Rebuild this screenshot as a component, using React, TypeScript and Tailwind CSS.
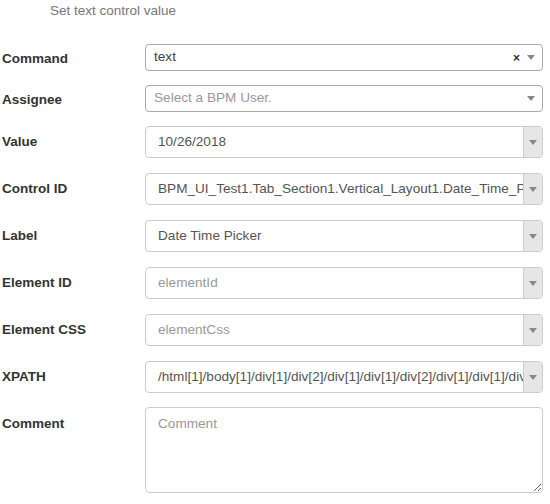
import React from "react";

const Arrow = () => (
  <span className="block w-0 h-0 border-l-[4px] border-r-[4px] border-t-[5px] border-l-transparent border-r-transparent border-t-[#888]" />
);

function Label({ children, mt = "" }: { children: React.ReactNode; mt?: string }) {
  return (
    <div className={`w-[145px] shrink-0 pl-[2px] text-[13.5px] font-bold text-[#333] ${mt}`}>{children}</div>
  );
}

function Select2({ value, placeholder, clear }: { value?: string; placeholder?: string; clear?: boolean }) {
  return (
    <div className="flex items-center h-[27px] w-[398px] border border-[#aaa] rounded-[4px] bg-white pl-[8px] pr-[7px]">
      <span className={`flex-1 text-[13.6px] ${value ? "text-[#444]" : "text-[#999]"}`}>{value ?? placeholder}</span>
      {clear && <span className="text-[12px] font-bold text-[#333] mr-[7px] leading-none">×</span>}
      <Arrow />
    </div>
  );
}

function Combo({ value, placeholder }: { value?: string; placeholder?: string }) {
  return (
    <div className="flex h-[32px] w-[398px] border border-[#ccc] rounded-[4px] bg-white overflow-hidden">
      <div className={`flex-1 min-w-0 overflow-hidden whitespace-nowrap flex items-center pl-[12px] text-[13.6px] ${value ? "text-[#555]" : "text-[#999]"}`}>
        {value ?? placeholder}
      </div>
      <div className="w-[19px] shrink-0 bg-[#e6e6e6] border-l border-[#ccc] flex items-center justify-center">
        <Arrow />
      </div>
    </div>
  );
}

export default function App() {
  return (
    <div className="w-[550px] h-[504px] bg-white font-['Liberation_Sans',Arial,sans-serif] text-[#333] overflow-hidden">
      <div className="pl-[50px] pt-[1px] text-[13.5px] text-[#777] h-[44px]">Set text control value</div>

      <div className="flex items-center mb-[14px]">
        <Label mt="mt-[4px]">Command</Label>
        <Select2 value="text" clear />
      </div>
      <div className="flex items-center mb-[14px]">
        <Label mt="mt-[4px]">Assignee</Label>
        <Select2 placeholder="Select a BPM User." />
      </div>
      <div className="flex items-center mb-[15px]">
        <Label>Value</Label>
        <Combo value="10/26/2018" />
      </div>
      <div className="flex items-center mb-[15px]">
        <Label>Control ID</Label>
        <Combo value="BPM_UI_Test1.Tab_Section1.Vertical_Layout1.Date_Time_Picker1" />
      </div>
      <div className="flex items-center mb-[15px]">
        <Label>Label</Label>
        <Combo value="Date Time Picker" />
      </div>
      <div className="flex items-center mb-[15px]">
        <Label>Element ID</Label>
        <Combo placeholder="elementId" />
      </div>
      <div className="flex items-center mb-[15px]">
        <Label>Element CSS</Label>
        <Combo placeholder="elementCss" />
      </div>
      <div className="flex items-center mb-[14px]">
        <Label>XPATH</Label>
        <Combo value="/html[1]/body[1]/div[1]/div[2]/div[1]/div[1]/div[2]/div[1]/div[1]/div[1]" />
      </div>
      <div className="flex items-start">
        <Label mt="mt-[7px]">Comment</Label>
        <textarea
          placeholder="Comment"
          className="w-[398px] h-[86px] border border-[#ccc] rounded-[4px] px-[12px] py-[6px] text-[13.6px] text-[#555] placeholder:text-[#999] resize-y outline-none font-['Liberation_Sans',Arial,sans-serif]"
        />
      </div>
    </div>
  );
}
